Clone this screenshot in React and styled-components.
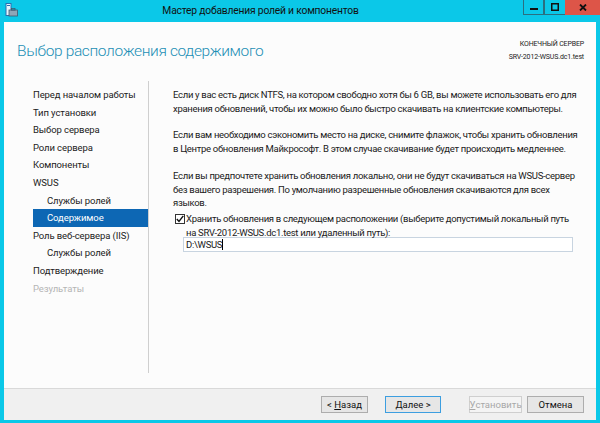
import React from "react";
import styled, { createGlobalStyle } from "styled-components";

const GlobalStyle = createGlobalStyle`
  html, body { margin: 0; padding: 0; background: #0bc8e8; }
  body { font-family: Roboto, "Noto Sans", sans-serif; }
`;

const Frame = styled.div`
  width: 600px;
  height: 423px;
  background: #0bc8e8;
  display: flex;
  flex-direction: column;
  box-sizing: border-box;
  padding: 0 4px 3px 4px;
  overflow: hidden;
`;

const TitleBar = styled.div`
  height: 22px;
  display: flex;
  align-items: flex-start;
`;

const AppIcon = styled.svg`
  margin: 3px 0 0 1px;
`;

const TitleText = styled.div`
  flex: 1;
  text-align: center;
  font-size: 10.3px;
  letter-spacing: -0.2px;
  line-height: 22px;
  color: #111;
  margin: 0 28px 0 8px;
`;

const WinButtons = styled.div`
  display: flex;
  margin-right: -4px;
`;

const WinButton = styled.div`
  width: ${(p) => p.$w}px;
  height: 15px;
  box-sizing: border-box;
  background: ${(p) => (p.$close ? "#dd5548" : "transparent")};
  border: ${(p) => (p.$close ? "none" : "1px solid #2b6f80")};
  border-top: none;
  border-right: ${(p) => (p.$last || p.$close ? "none" : "1px solid #2b6f80")};
  display: flex;
  align-items: center;
  justify-content: center;
`;

const Client = styled.div`
  flex: 1;
  background: #fcfcfc;
  display: flex;
  flex-direction: column;
`;

const Header = styled.div`
  height: 59px;
  display: flex;
  justify-content: space-between;
  align-items: flex-start;
  padding: 0 12px 0 13px;
`;

const Heading = styled.h1`
  margin: 20px 0 0 0;
  font-size: 15.5px;
  font-weight: 300;
  letter-spacing: -0.35px;
  color: #1d8fb5;
`;

const ServerInfo = styled.div`
  margin-top: 16px;
  text-align: right;
  font-size: 7px;
  letter-spacing: -0.15px;
  line-height: 13px;
  color: #222;
`;

const Body = styled.div`
  flex: 1;
  display: flex;
  padding-bottom: 15px;
`;

const Nav = styled.div`
  width: 145px;
  flex-shrink: 0;
  border-right: 1px solid #cfcfcf;
  padding-top: 5px;
  box-sizing: border-box;
`;

const NavItem = styled.div`
  height: 17.6px;
  line-height: 17px;
  margin-left: 29px;
  padding-left: ${(p) => (p.$sub ? 14 : 0)}px;
  font-size: 9.5px;
  letter-spacing: -0.1px;
  white-space: nowrap;
  color: ${(p) => (p.$active ? "#fff" : p.$disabled ? "#b5b5b5" : "#222")};
  background: ${(p) => (p.$active ? "#0d67b4" : "transparent")};
`;

const Content = styled.div`
  flex: 1;
  min-width: 0;
  padding: 7px 0 0 24px;
  font-size: 9.5px;
  line-height: 13.7px;
  letter-spacing: -0.3px;
  color: #1a1a1a;
`;

const Para = styled.p`
  margin: 0 0 ${(p) => (p.$last ? 2 : 13)}px 0;
  white-space: nowrap;
`;

const CheckRow = styled.div`
  display: flex;
  align-items: flex-start;
`;

const CheckBox = styled.div`
  width: 10px;
  height: 10px;
  margin: 2px 1px 0 2px;
  border: 1px solid #333;
  box-sizing: border-box;
  display: flex;
  align-items: center;
  justify-content: center;
  background: #fff;
  flex-shrink: 0;
`;

const CheckLabel = styled.div`
  white-space: nowrap;
`;

const PathInput = styled.div`
  margin: -2px 0 0 10px;
  width: 390px;
  height: 15px;
  box-sizing: border-box;
  border: 1px solid #c8d4e0;
  background: #fff;
  font-size: 9.5px;
  padding-left: 2px;
  display: flex;
  align-items: center;
`;

const Caret = styled.span`
  display: inline-block;
  width: 1px;
  height: 11px;
  background: #000;
`;

const Footer = styled.div`
  height: 32px;
  border-top: 1px solid #d9d9d9;
  background: #f0f0f0;
  display: flex;
  justify-content: flex-end;
  align-items: flex-start;
  padding: 7px 12px 0 0;
  box-sizing: border-box;
`;

const Button = styled.div`
  width: ${(p) => p.$w}px;
  height: 17px;
  margin-left: ${(p) => p.$ml || 0}px;
  box-sizing: border-box;
  border: 1px solid ${(p) => (p.$primary ? "#3c9ee0" : p.$disabled ? "#cfcfcf" : "#adadad")};
  background: ${(p) => (p.$disabled ? "#f4f4f4" : "#e6e6e6")};
  color: ${(p) => (p.$disabled ? "#a8a8a8" : "#111")};
  font-size: 9.5px;
  display: flex;
  align-items: center;
  justify-content: center;
  white-space: pre;
`;

const navItems = [
  { t: "Перед началом работы" },
  { t: "Тип установки" },
  { t: "Выбор сервера" },
  { t: "Роли сервера" },
  { t: "Компоненты" },
  { t: "WSUS" },
  { t: "Службы ролей", sub: true },
  { t: "Содержимое", sub: true, active: true },
  { t: "Роль веб-сервера (IIS)" },
  { t: "Службы ролей", sub: true },
  { t: "Подтверждение" },
  { t: "Результаты", disabled: true },
];

export default function App() {
  return (
    <>
      <GlobalStyle />
      <Frame>
        <TitleBar>
          <AppIcon width="13" height="14" viewBox="0 0 13 14">
            <rect x="1" y="0.5" width="5" height="12" fill="#e8f4fb" stroke="#2a6fb0" />
            <rect x="2" y="2" width="3" height="1" fill="#2a6fb0" />
            <rect x="4" y="7" width="8.5" height="6" fill="#8fa6b8" stroke="#3f5a70" strokeWidth="0.8" />
            <rect x="6.5" y="5.5" width="3.5" height="1.6" fill="none" stroke="#3f5a70" strokeWidth="0.8" />
          </AppIcon>
          <TitleText>Мастер добавления ролей и компонентов</TitleText>
          <WinButtons>
            <WinButton $w={21}>
              <svg width="8" height="8" viewBox="0 0 8 8"><rect x="0" y="5" width="8" height="2" fill="#111" /></svg>
            </WinButton>
            <WinButton $w={21} $last>
              <svg width="8" height="8" viewBox="0 0 8 8"><rect x="0.75" y="0.75" width="6.5" height="6.5" fill="none" stroke="#111" strokeWidth="1.5" /></svg>
            </WinButton>
            <WinButton $w={35} $close>
              <svg width="8" height="7" viewBox="0 0 8 7"><path d="M1 0.5 L7 6.5 M7 0.5 L1 6.5" stroke="#111" strokeWidth="1.8" /></svg>
            </WinButton>
          </WinButtons>
        </TitleBar>
        <Client>
          <Header>
            <Heading>Выбор расположения содержимого</Heading>
            <ServerInfo>
              КОНЕЧНЫЙ СЕРВЕР
              <br />
              SRV-2012-WSUS.dc1.test
            </ServerInfo>
          </Header>
          <Body>
            <Nav>
              {navItems.map((n, i) => (
                <NavItem key={i} $sub={n.sub} $active={n.active} $disabled={n.disabled}>
                  {n.t}
                </NavItem>
              ))}
            </Nav>
            <Content>
              <Para>
                Если у вас есть диск NTFS, на котором свободно хотя бы 6 GB, вы можете использовать его для
                <br />
                хранения обновлений, чтобы их можно было быстро скачивать на клиентские компьютеры.
              </Para>
              <Para>
                Если вам необходимо сэкономить место на диске, снимите флажок, чтобы хранить обновления
                <br />
                в Центре обновления Майкрософт. В этом случае скачивание будет происходить медленнее.
              </Para>
              <Para $last>
                Если вы предпочтете хранить обновления локально, они не будут скачиваться на WSUS-сервер
                <br />
                без вашего разрешения. По умолчанию разрешенные обновления скачиваются для всех
                <br />
                языков.
              </Para>
              <CheckRow>
                <CheckBox>
                  <svg width="8" height="8" viewBox="0 0 8 8"><path d="M0.8 4 L3 6.5 L7.3 0.8" fill="none" stroke="#111" strokeWidth="1.4" /></svg>
                </CheckBox>
                <CheckLabel>
                  Хранить обновления в следующем расположении (выберите допустимый локальный путь
                  <br />
                  на SRV-2012-WSUS.dc1.test или удаленный путь):
                </CheckLabel>
              </CheckRow>
              <PathInput>
                D:\WSUS<Caret />
              </PathInput>
            </Content>
          </Body>
          <Footer>
            <Button $w={47}>{"< "}<u>Н</u>азад</Button>
            <Button $w={56} $ml={17} $primary><u>Д</u>алее{" >"}</Button>
            <Button $w={53} $ml={28} $disabled><u>У</u>становить</Button>
            <Button $w={57} $ml={5}>Отмена</Button>
          </Footer>
        </Client>
      </Frame>
    </>
  );
}
